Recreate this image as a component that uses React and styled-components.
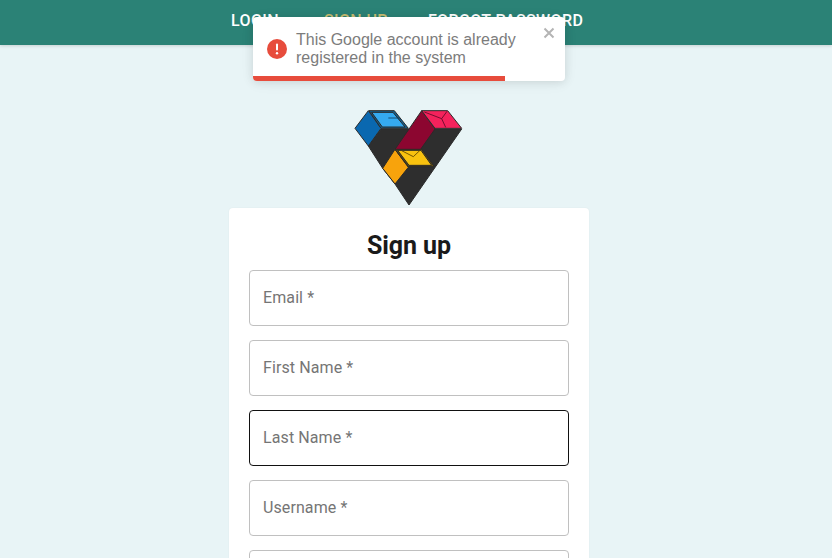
import React from "react";
import styled, { createGlobalStyle } from "styled-components";

const Global = createGlobalStyle`
  html, body { margin: 0; padding: 0; height: 100%; overflow: hidden; background: #e8f4f6; }
  body { font-family: Roboto, "Liberation Sans", sans-serif; }
  #root { height: 100%; }
`;
const Page = styled.div`
  position: relative; height: 558px; overflow: hidden; background: #e8f4f6; box-sizing: border-box;
  padding-right: 14px;
  display: flex; flex-direction: column; align-items: center;
`;
const Nav = styled.nav`
  width: 832px; margin-right: -14px; height: 45px; flex: none; background: #2b8276;
  box-shadow: 0 1px 3px rgba(0,0,0,.15);
  display: flex; justify-content: flex-start; align-items: flex-start; gap: 40px;
  padding: 11px 0 0 231px; box-sizing: border-box;
`;
const NavLink = styled.a`
  font-size: 16px; line-height: 19px; font-weight: 500; text-transform: uppercase;
  letter-spacing: 0.4px; margin-right: ${p => p.$after || 0}px;
  color: ${p => (p.$active ? "#c9bd72" : "#fff")};
`;
const Toast = styled.div`
  position: absolute; left: 253px; top: 17px; width: 312px; height: 64px;
  background: #fff; border-radius: 4px; overflow: hidden;
  box-shadow: 0 1px 10px rgba(0,0,0,.1), 0 2px 15px rgba(0,0,0,.05);
  display: flex; align-items: center; padding: 0 44px 0 14px; box-sizing: border-box; gap: 9px;
  font-family: "Liberation Sans", Arial, sans-serif; font-size: 16px; line-height: 18px; color: #7c7c7c;
`;
const ToastText = styled.div`flex: 1;`;
const Close = styled.span`
  position: absolute; right: 9px; top: 9px; width: 14px; height: 14px; color: #b4b4b4;
  display: flex;
`;
const Progress = styled.div`
  position: absolute; left: 0; bottom: 0; height: 5px; background: #e74c3c;
`;
const Logo = styled.svg`
  width: 130px; height: 110px; flex: none; margin: 55px 0 -2px 2px; display: block;
`;
const Card = styled.form`
  width: 360px; flex: none; box-sizing: border-box; background: #fff; border-radius: 4px;
  padding: 20px; display: flex; flex-direction: column; gap: 14px;
  box-shadow: 0 0 2px rgba(0,0,0,.06);
`;
const Title = styled.h1`
  margin: 0 0 -7px; font-size: 25px; line-height: 35px; font-weight: 700; text-align: center; color: #1a1a1a;
  letter-spacing: -0.1px;
`;
const Field = styled.div`
  height: 56px; flex: none; box-sizing: border-box; border-radius: 4px;
  border: 1px solid ${p => (p.$focused ? "#111" : "#c0c0c0")};
  padding: 0 13px 2px; display: flex; align-items: center;
  font-size: 16px; color: #757575; letter-spacing: 0.1px;
`;

function ErrorIcon() {
  return (
    <svg width="20" height="20" viewBox="0 0 20 20" style={{ flex: "none" }}>
      <circle cx="10" cy="10" r="10" fill="#e74c3c" />
      <rect x="9" y="4.5" width="2" height="7" rx="1" fill="#fff" />
      <circle cx="10" cy="14.2" r="1.2" fill="#fff" />
    </svg>
  );
}

export default function App() {
  return (
    <Page>
      <Global />
      <Nav>
        <NavLink $after={5}>Login</NavLink>
        <NavLink $active>Sign up</NavLink>
        <NavLink>Forgot password</NavLink>
      </Nav>
      <Logo viewBox="0 0 390 330">
        <g stroke="#2a2a2a" strokeWidth="3" strokeLinejoin="round">
          <polygon points="108,87 190,87 270,87 350,87 192,315 150,252 113,205 70,138" fill="#2e2e2e" />
          <polygon points="30,85 70,32 108,85 70,138" fill="#0a68b0" />
          <polygon points="72,32 148,32 190,85 108,85" fill="#14608f" />
          <polygon points="80,37 144,37 180,81 112,81" fill="#35aaf0" />
          <polygon points="230,32 270,87 190,200 150,148" fill="#8c0630" />
          <polygon points="230,32 308,32 350,85 270,85" fill="#f5225c" />
          <polygon points="150,148 190,202 150,252 113,205" fill="#f8a30c" />
          <polygon points="150,148 230,148 268,200 190,200" fill="#6e5206" />
          <polygon points="158,151 228,151 260,196 192,196" fill="#f9c20f" />
        </g>
        <g fill="none" strokeWidth="2.5" strokeLinejoin="round">
          <path d="M130 54 H164" stroke="#123a55" />
          <path d="M238 36 L290 56 L306 34 M290 56 L302 82" stroke="#5c0a26" />
          <path d="M170 152 L205 170 L226 150" stroke="#5a4200" />
        </g>
      </Logo>
      <Card>
        <Title>Sign up</Title>
        <Field>Email *</Field>
        <Field>First Name *</Field>
        <Field $focused>Last Name *</Field>
        <Field>Username *</Field>
        <Field />
      </Card>
      <Toast>
        <ErrorIcon />
        <ToastText>This Google account is already registered in the system</ToastText>
        <Close>
          <svg width="14" height="14" viewBox="0 0 14 14">
            <path d="M2.5 2.5 L11.5 11.5 M11.5 2.5 L2.5 11.5" stroke="currentColor" strokeWidth="2" />
          </svg>
        </Close>
        <Progress style={{ width: "252px" }} />
      </Toast>
    </Page>
  );
}
